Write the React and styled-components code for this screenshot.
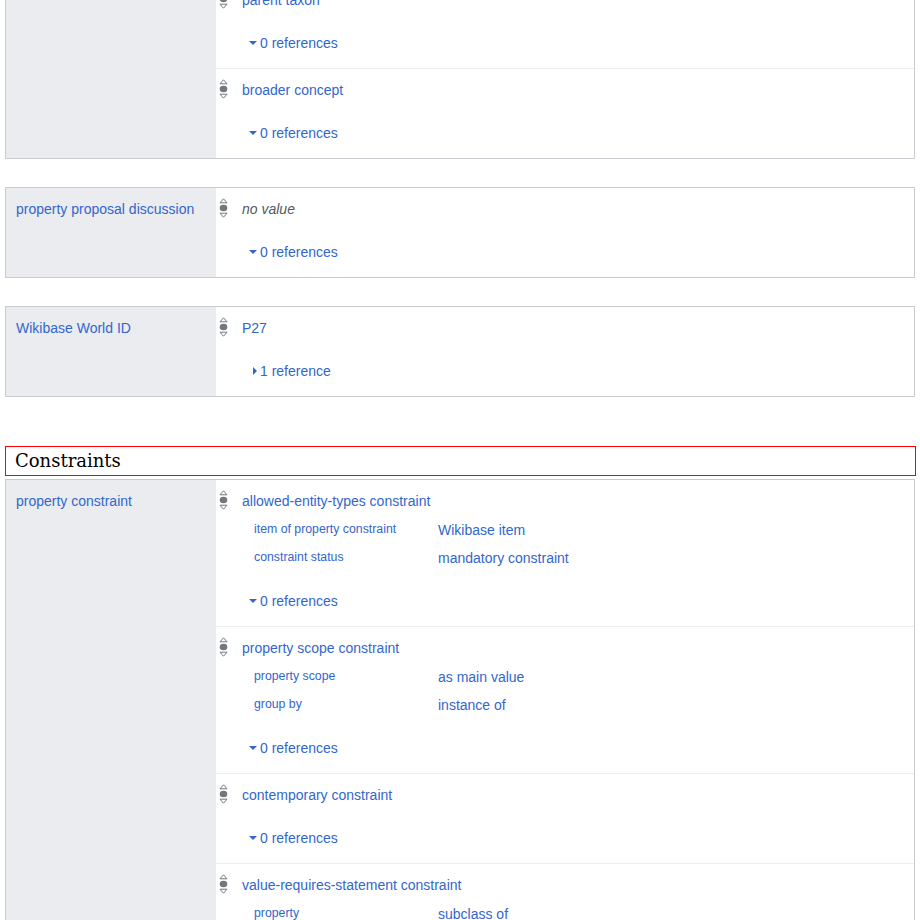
import React from 'react';
import styled, { createGlobalStyle } from 'styled-components';

const GlobalStyle = createGlobalStyle`
  body {
    margin: 0;
    background: #fff;
    font-family: "Liberation Sans", Arial, sans-serif;
    font-size: 14px;
    color: #202122;
  }
`;

// page is shown scrolled down, so the first group starts above the fold
const Page = styled.div`
  margin-top: -112px;
  padding: 0 5px;
  display: flex;
  flex-direction: column;
`;

const Group = styled.div`
  display: flex;
  border: 1px solid #c8ccd1;
  margin-bottom: 28px;
`;

const GroupLabel = styled.div`
  width: 210px;
  flex-shrink: 0;
  background: #eaecf0;
  padding: 11px 10px;
  box-sizing: border-box;
  line-height: 20px;
  color: #3366cc;
`;

const StatementList = styled.div`
  flex: 1;
  display: flex;
  flex-direction: column;
`;

const Statement = styled.div`
  display: flex;
  padding: 11px 0 15px;
  & + & {
    border-top: 1px solid #eaecf0;
  }
`;

const RankBox = styled.div`
  width: 26px;
  flex-shrink: 0;
  padding-left: 3px;
  box-sizing: border-box;
  margin-top: -1px;
`;

const Body = styled.div`
  flex: 1;
  display: flex;
  flex-direction: column;
`;

const MainSnak = styled.div`
  line-height: 20px;
  color: ${p => (p.$novalue ? '#54595d' : '#3366cc')};
  font-style: ${p => (p.$novalue ? 'italic' : 'normal')};
`;

const Qualifiers = styled.div`
  margin: 5px 0 -4px;
`;

const QualifierRow = styled.div`
  display: flex;
  align-items: baseline;
  height: 28px;
  line-height: 28px;
`;

const QualifierProperty = styled.span`
  width: 196px;
  padding-left: 12px;
  box-sizing: border-box;
  font-size: 12.3px;
  color: #3366cc;
  position: relative;
  top: -2px;
`;

const QualifierValue = styled.span`
  color: #3366cc;
`;

const References = styled.div`
  margin-top: 23px;
  padding-left: 7px;
  display: flex;
  align-items: center;
  line-height: 20px;
  color: #3366cc;
`;

const Toggle = styled.span`
  width: 11px;
  flex-shrink: 0;
  display: flex;
  align-items: center;
  justify-content: ${p => (p.$open ? 'flex-start' : 'center')};
  &::before {
    content: '';
    display: block;
    ${p =>
      p.$open
        ? `border-left: 4px solid transparent;
           border-right: 4px solid transparent;
           border-top: 4px solid #3366cc;`
        : `border-top: 4px solid transparent;
           border-bottom: 4px solid transparent;
           border-left: 4px solid #3366cc;`}
  }
`;

const Heading = styled.h2`
  margin: 21px -1px 3px 0;
  border: 1px solid #ff0000;
  padding: 0 9px;
  height: 30px;
  box-sizing: border-box;
  font-family: "DejaVu Serif", "Liberation Serif", Georgia, serif;
  font-weight: normal;
  font-size: 18px;
  line-height: 28px;
  color: #000;
`;

const RankIcon = () => (
  <svg width="9" height="20" viewBox="0 0 9 20">
    <path d="M4.5 0.8 L8 4.8 L1 4.8 Z" fill="#fff" stroke="#72777d" strokeWidth="1" />
    <ellipse cx="4.5" cy="10" rx="3.8" ry="3.2" fill="#72777d" />
    <path d="M1 15.2 L8 15.2 L4.5 19.2 Z" fill="#fff" stroke="#72777d" strokeWidth="1" />
  </svg>
);

const StatementView = ({ statement }) => {
  const { value, novalue, qualifiers = [], refs = 0 } = statement;
  return (
    <Statement>
      <RankBox>
        <RankIcon />
      </RankBox>
      <Body>
        <MainSnak $novalue={novalue}>{value}</MainSnak>
        {qualifiers.length > 0 && (
          <Qualifiers>
            {qualifiers.map(([prop, val]) => (
              <QualifierRow key={prop}>
                <QualifierProperty>{prop}</QualifierProperty>
                <QualifierValue>{val}</QualifierValue>
              </QualifierRow>
            ))}
          </Qualifiers>
        )}
        <References>
          <Toggle $open={refs === 0} />
          {refs === 1 ? '1 reference' : `${refs} references`}
        </References>
      </Body>
    </Statement>
  );
};

const StatementGroup = ({ label, statements }) => (
  <Group>
    <GroupLabel>{label}</GroupLabel>
    <StatementList>
      {statements.map(s => (
        <StatementView key={s.value} statement={s} />
      ))}
    </StatementList>
  </Group>
);

const groups = [
  {
    label: 'related property',
    statements: [
      { value: 'subclass of' },
      { value: 'parent taxon' },
      { value: 'broader concept' },
    ],
  },
  {
    label: 'property proposal discussion',
    statements: [{ value: 'no value', novalue: true }],
  },
  {
    label: 'Wikibase World ID',
    statements: [{ value: 'P27', refs: 1 }],
  },
];

const constraints = [
  {
    label: 'property constraint',
    statements: [
      {
        value: 'allowed-entity-types constraint',
        qualifiers: [
          ['item of property constraint', 'Wikibase item'],
          ['constraint status', 'mandatory constraint'],
        ],
      },
      {
        value: 'property scope constraint',
        qualifiers: [
          ['property scope', 'as main value'],
          ['group by', 'instance of'],
        ],
      },
      { value: 'contemporary constraint' },
      {
        value: 'value-requires-statement constraint',
        qualifiers: [
          ['property', 'subclass of'],
          ['constraint status', 'suggestion constraint'],
        ],
      },
    ],
  },
];

export default function App() {
  return (
    <>
      <GlobalStyle />
      <Page>
        {groups.map(g => (
          <StatementGroup key={g.label} {...g} />
        ))}
        <Heading>Constraints</Heading>
        {constraints.map(g => (
          <StatementGroup key={g.label} {...g} />
        ))}
      </Page>
    </>
  );
}
